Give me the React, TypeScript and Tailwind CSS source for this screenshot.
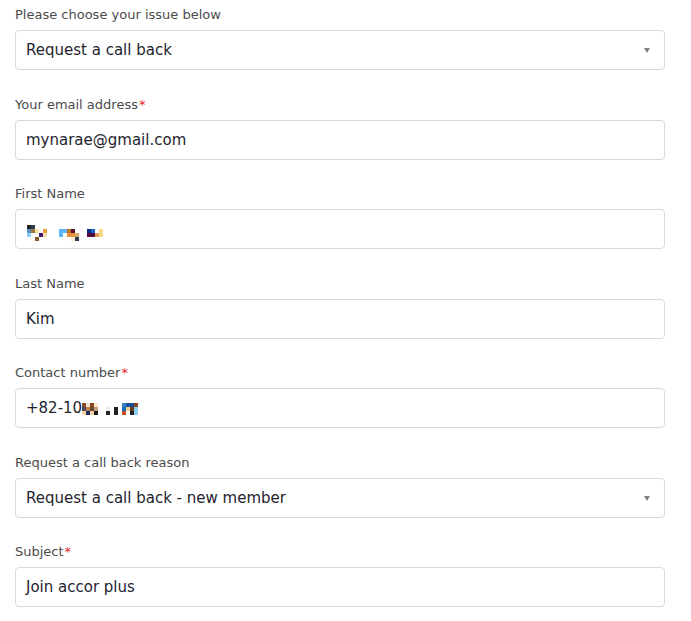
import type { ReactElement } from 'react'

type Px = [number, number, number, string]

// pixelated (mosaic) bits of redacted values: [col, row, width in cells, colour]
const firstNameBlur: Px[] = [
  [0, 0, 1, '#222222'], [1, 0, 1, '#2c3e50'],
  [0, 1, 1, '#5b8fb9'], [1, 1, 1, '#a07040'], [2, 1, 1, '#f8e0a0'], [4, 1, 1, '#e8a040'],
  [0, 2, 1, '#8ad0f5'], [3, 2, 1, '#4a1a6a'], [4, 2, 1, '#f8e0a8'],
  [2, 3, 1, '#8a5a30'],
  [8, 1, 2, '#5ab4f5'], [10, 1, 1, '#c07020'], [11, 1, 1, '#5a1030'],
  [8, 2, 1, '#5ab4f5'], [10, 2, 2, '#e89040'], [12, 2, 1, '#d0a870'],
  [11, 3, 1, '#fdf0d0'], [12, 3, 1, '#2a3a50'],
  [15, 1, 1, '#0a2a8a'], [16, 1, 1, '#1560c0'], [18, 1, 1, '#f9d88a'],
  [15, 2, 2, '#500a40'], [17, 2, 1, '#e8a060'], [18, 2, 1, '#f9d88a'],
]

const phoneBlur: Px[] = [
  [0, 0, 1, '#8a4a20'], [1, 0, 1, '#f0e0d0'], [2, 0, 1, '#8a4a20'], [3, 0, 1, '#f8e8c8'],
  [0, 1, 1, '#4a4a5a'], [1, 1, 1, '#c08040'], [2, 1, 1, '#6a4a30'], [3, 1, 1, '#c0a080'],
  [0, 2, 1, '#f8d8a0'], [1, 2, 1, '#1a2a6a'], [2, 2, 1, '#f0d0a0'], [3, 2, 1, '#1a1a1a'],
  [6, 1, 1, '#ecece4'], [6, 2, 1, '#222222'],
  [8, 1, 1, '#222222'], [8, 2, 1, '#222222'],
  [10, 0, 1, '#3a80c0'], [11, 0, 1, '#1550a0'], [12, 0, 1, '#1550a0'], [13, 0, 1, '#8a4a20'],
  [10, 1, 1, '#1a6ac0'], [11, 1, 1, '#f0d090'], [12, 1, 1, '#6a4020'], [13, 1, 1, '#8ad0f5'],
  [10, 2, 1, '#c05020'], [12, 2, 1, '#222222'], [13, 2, 1, '#8ad0f5'],
]

function Mosaic({ cells, cols }: { cells: Px[]; cols: number }): ReactElement {
  return (
    <span className="relative inline-block h-[12px] align-middle" style={{ width: cols * 4 }}>
      {cells.map(([c, r, w, color], i) => (
        <span
          key={i}
          className="absolute h-[4px]"
          style={{ left: c * 4, top: r * 4, width: w * 4, background: color }}
        />
      ))}
    </span>
  )
}

function Field({
  label,
  required,
  select,
  children,
}: {
  label: string
  required?: boolean
  select?: boolean
  children: React.ReactNode
}): ReactElement {
  return (
    <div className="flex flex-col">
      <label className="h-[20px] pt-[1px] text-[13px] leading-[20px] text-[#4b4b4b]">
        {label}
        {required && <span className="ml-[1px] text-[#e8262b]">*</span>}
      </label>
      <div className="mt-[6px] flex h-[40px] items-center rounded-[4px] border border-[#dadada] bg-white pl-[10px] pr-[14px] pt-[1px] text-[15px] text-[#24242e]">
        <div className="flex flex-1 items-center whitespace-nowrap">{children}</div>
        {select && (
          <span className="h-0 w-0 border-x-[3px] border-t-[5px] border-x-transparent border-t-[#7a7f88]" />
        )}
      </div>
    </div>
  )
}

export default function App(): ReactElement {
  return (
    <div className="min-h-screen bg-white font-['DejaVu_Sans',sans-serif]">
      <div className="flex w-[665px] flex-col gap-[23.5px] pl-[15px] pt-[4px]">
        <Field label="Please choose your issue below" select>
          Request a call back
        </Field>
        <Field label="Your email address" required>
          mynarae@gmail.com
        </Field>
        <Field label="First Name">
          <span className="ml-[1px] mt-[2px] flex">
            <Mosaic cells={firstNameBlur} cols={20} />
          </span>
        </Field>
        <Field label="Last Name">Kim</Field>
        <Field label="Contact number" required>
          +82-10
          <Mosaic cells={phoneBlur} cols={14} />
        </Field>
        <Field label="Request a call back reason" select>
          Request a call back - new member
        </Field>
        <Field label="Subject" required>
          Join accor plus
        </Field>
      </div>
    </div>
  )
}
